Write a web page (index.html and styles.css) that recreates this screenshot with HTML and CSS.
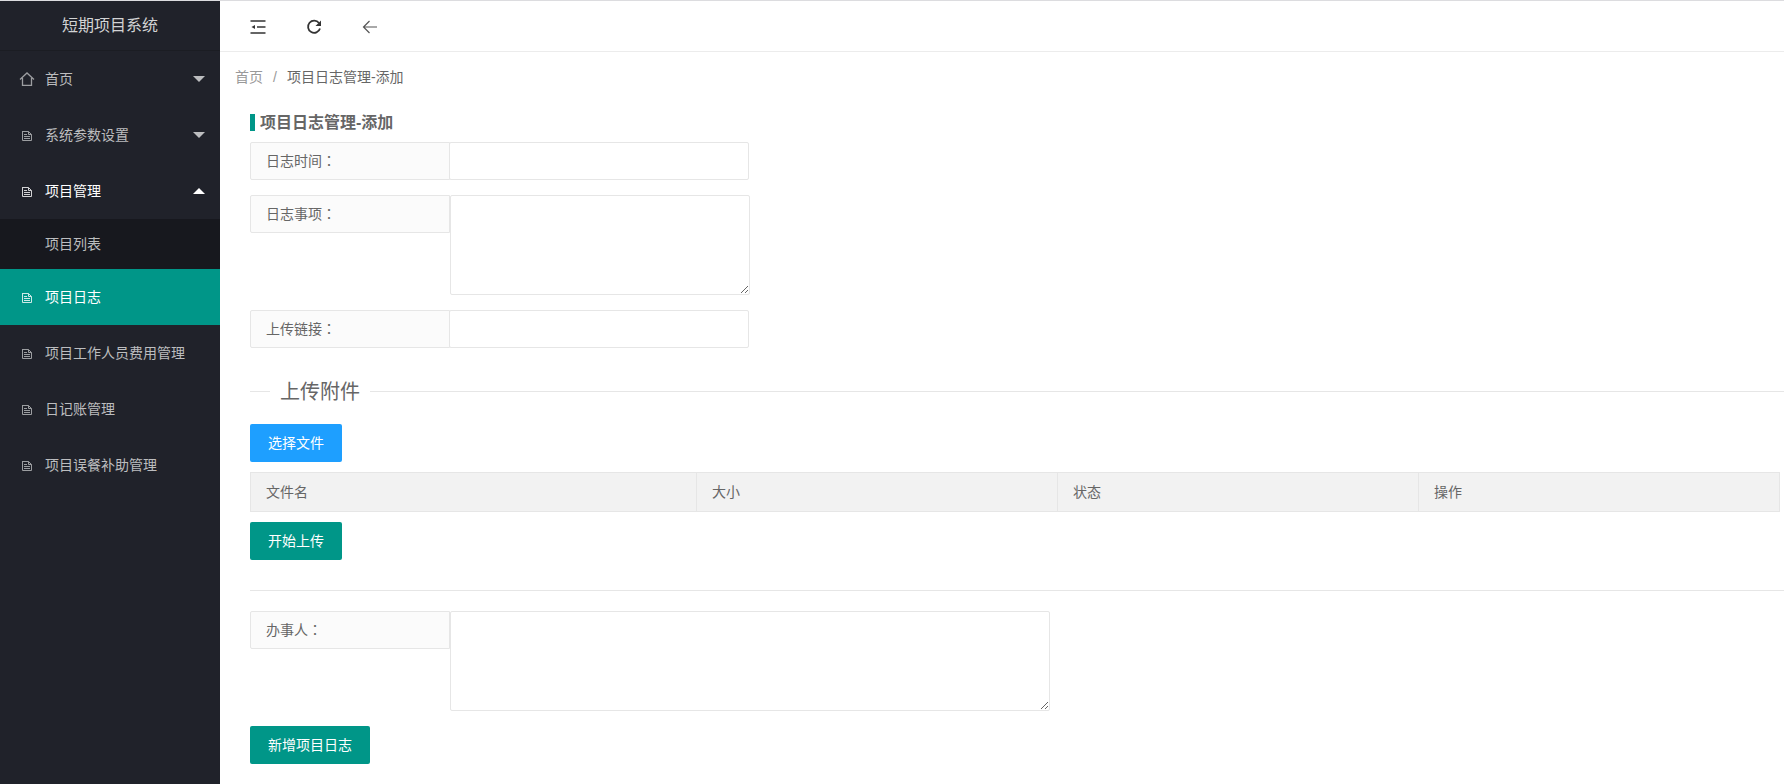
FILE: index.html
```html
<!DOCTYPE html>
<html lang="zh-CN">
<head>
    <meta charset="UTF-8">
    <title>短期项目系统</title>
    <link rel="stylesheet" href="styles.css">
</head>
<body>
<!-- 图标 -->
<svg class="icons">
    <symbol id="icon-file" viewBox="0 0 10 10">
        <path d="M.5 0v9.5h9v-6l-3-3H.5 M6.5.5v3h3 M2 3.5h3 M2 5.5h6 M2 7.5h6" fill="none" stroke="currentColor"/>
    </symbol>
    <symbol id="icon-home" viewBox="0 0 16 14">
        <path d="M1 7.5 8 1l7 6.5 M3.5 6v7.3h9V6" fill="none" stroke="currentColor" stroke-width="1.3"/>
    </symbol>
</svg>
<div class="layout">
    <div class="side">
        <div class="logo">短期项目系统</div>
        <ul class="nav">
            <li>
                <a href="#"><svg class="home"><use href="#icon-home"/></svg>首页<span class="more"></span></a>
            </li>
            <li>
                <a href="#"><svg><use href="#icon-file"/></svg>系统参数设置<span class="more"></span></a>
            </li>
            <li class="open">
                <a href="#"><svg><use href="#icon-file"/></svg>项目管理<span class="more"></span></a>
                <ul class="child">
                    <li><a href="#">项目列表</a></li>
                </ul>
            </li>
            <li class="this">
                <a href="#"><svg><use href="#icon-file"/></svg>项目日志</a>
            </li>
            <li>
                <a href="#"><svg><use href="#icon-file"/></svg>项目工作人员费用管理</a>
            </li>
            <li>
                <a href="#"><svg><use href="#icon-file"/></svg>日记账管理</a>
            </li>
            <li>
                <a href="#"><svg><use href="#icon-file"/></svg>项目误餐补助管理</a>
            </li>
        </ul>
    </div>
    <div class="main">
        <div class="header">
            <a href="#" title="侧边伸缩">
                <svg viewBox="0 0 16 16">
                    <path d="M.5 2h15 M7 8h8.5 M.5 14h15" fill="none" stroke="#333" stroke-width="1.7"/>
                    <path d="M1.5 8 5 6v4z" fill="#333"/>
                </svg>
            </a>
            <a href="#" title="刷新">
                <svg viewBox="0 0 16 16">
                    <path d="M13 4A6.1 6.1 0 1 0 14 9.5" fill="none" stroke="#333" stroke-width="1.8"/>
                    <path d="M15 1.5V7H9.5z" fill="#333"/>
                </svg>
            </a>
            <a href="#" title="返回">
                <svg viewBox="0 0 16 16">
                    <path d="M15 8H1.5 M7.5 2l-6 6 6 6" fill="none" stroke="#555" stroke-width="1.2"/>
                </svg>
            </a>
        </div>
        <div class="breadcrumb">
            <a href="#">首页</a><span>/</span><cite>项目日志管理-添加</cite>
        </div>
        <form class="content">
            <h3>项目日志管理-添加</h3>
            <div class="item">
                <label for="logTime">日志时间<span lang="zh-TW">：</span></label>
                <input type="text" id="logTime">
            </div>
            <div class="item">
                <label for="logItem">日志事项<span lang="zh-TW">：</span></label>
                <textarea id="logItem"></textarea>
            </div>
            <div class="item">
                <label for="logLink">上传链接<span lang="zh-TW">：</span></label>
                <input type="text" id="logLink">
            </div>
            <fieldset>
                <legend>上传附件</legend>
            </fieldset>
            <div class="upload">
                <button type="button" class="btn btn-blue">选择文件</button>
                <table>
                    <thead>
                    <tr>
                        <th class="name">文件名</th>
                        <th>大小</th>
                        <th>状态</th>
                        <th>操作</th>
                    </tr>
                    </thead>
                </table>
                <button type="button" class="btn">开始上传</button>
            </div>
            <hr>
            <div class="item">
                <label for="person">办事人<span lang="zh-TW">：</span></label>
                <textarea id="person" class="long"></textarea>
            </div>
            <button type="button" class="btn">新增项目日志</button>
        </form>
    </div>
</div>
</body>
</html>
```
FILE: styles.css
```css
* {
    box-sizing: border-box;
}

body, ul, h3, fieldset, legend, hr {
    margin: 0;
    padding: 0;
}

body {
    font: 14px/24px "Liberation Sans", "Noto Sans CJK SC", sans-serif;
    color: #666;
    background: #fff;
}

ul {
    list-style: none;
}

a {
    color: inherit;
    text-decoration: none;
}

input, textarea, button {
    font: inherit;
    color: inherit;
}

.icons {
    display: none;
}

.layout {
    display: flex;
    min-height: 100vh;
    border-top: 1px solid #dcdcdf;
}

/* 左侧菜单 */
.side {
    flex: none;
    width: 220px;
    background: #20222a;
    color: #bcbdbf;
}

.logo {
    height: 50px;
    line-height: 49px;
    font-size: 16px;
    text-align: center;
    color: #d2d3d4;
    border-bottom: 1px solid #1b1d23;
}

.nav a {
    display: flex;
    align-items: center;
    height: 56px;
    padding: 0 15px 0 22px;
}

.nav svg {
    width: 10px;
    height: 10px;
    margin: 2px 13px 0 0;
    opacity: 0.8;
}

.nav .home {
    width: 16px;
    height: 14px;
    margin: 0 10px 0 -3px;
}

.nav .more {
    margin-left: auto;
    border: 6px solid transparent;
    border-top-color: #bcbdbf;
    border-bottom: 0;
}

.nav .open > a, .nav .this > a {
    color: #fff;
}

.nav .open .more {
    border-top: 0;
    border-bottom: 6px solid #fff;
}

.nav .child {
    background: #17181e;
}

.nav .child a {
    height: 50px;
    padding-left: 45px;
}

.nav .this {
    background: #009688;
}

.nav .this a {
    color: #fff;
}

/* 右侧 */
.main {
    flex: 1;
    min-width: 0;
}

.header {
    display: flex;
    gap: 40px;
    align-items: center;
    height: 51px;
    padding: 2px 30px 0;
    border-bottom: 1px solid #ececec;
}

.header svg {
    display: block;
    width: 16px;
    height: 16px;
}

.breadcrumb {
    padding: 13px 15px;
}

.breadcrumb a {
    color: #999;
}

.breadcrumb span {
    margin: 0 10px;
    color: #999;
}

.breadcrumb cite {
    font-style: normal;
}

.content {
    padding: 12px 0 20px 30px;
}

h3 {
    margin-bottom: 11px;
    padding-left: 5px;
    border-left: 5px solid #009688;
    font-size: 16px;
    line-height: 17px;
}

.item {
    display: flex;
    align-items: flex-start;
    margin-bottom: 15px;
}

.item label {
    width: 200px;
    height: 38px;
    padding: 0 15px;
    line-height: 36px;
    border: 1px solid #e6e6e6;
    border-radius: 2px 0 0 2px;
    background: #fbfbfb;
}

.item input, .item textarea {
    width: 300px;
    height: 38px;
    padding: 0 10px;
    border: 1px solid #e6e6e6;
    border-radius: 2px;
    background: #fff;
}

.item input {
    margin-left: -1px;
}

.item textarea {
    height: 100px;
    padding: 6px 10px;
    resize: both;
}

.item .long {
    width: 600px;
}

fieldset {
    margin-top: 30px;
    border: 0;
    border-top: 1px solid #e6e6e6;
}

legend {
    margin-left: 20px;
    padding: 2px 10px 0;
    font-size: 20px;
    line-height: 24px;
}

.upload {
    padding: 20px 4px 30px 0;
}

.btn {
    display: block;
    height: 38px;
    padding: 0 18px;
    border: 0;
    border-radius: 2px;
    color: #fff;
    background: #009688;
    cursor: pointer;
}

.btn-blue {
    background: #1e9fff;
}

table {
    width: 100%;
    margin: 10px 0;
    table-layout: fixed;
    border-collapse: collapse;
}

th {
    height: 39px;
    padding: 0 15px;
    border: 1px solid #e6e6e6;
    background: #f2f2f2;
    font-weight: 400;
    text-align: left;
}

.name {
    width: 446px;
}

hr {
    margin-bottom: 20px;
    border: 0;
    border-top: 1px solid #e6e6e6;
}
```
